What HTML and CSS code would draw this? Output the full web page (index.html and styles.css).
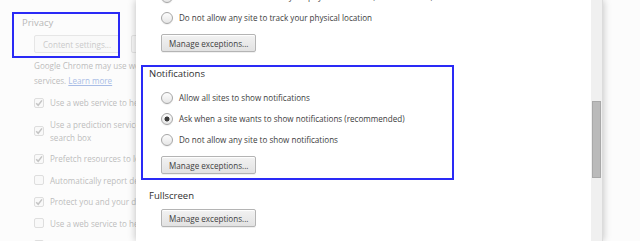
FILE: index.html
```html
<!DOCTYPE html>
<html lang="en">
<head>
    <meta charset="UTF-8">
    <title>Content settings</title>
    <link rel="stylesheet" href="styles.css">
</head>
<body>
    <!-- settings page behind the overlay -->
    <div class="settings">
        <h3 class="s-title">Privacy</h3>
        <div class="s-body">
            <div class="s-buttons">
                <button class="s-btn">Content settings...</button>
                <button class="s-btn">Clear browsing data...</button>
            </div>
            <p class="s-text">Google Chrome may use web services to improve your browsing experience. You may optionally disable these<br>services. <a href="#">Learn more</a></p>
            <ul class="s-list">
                <li><span class="cb on"></span><span>Use a web service to help resolve navigation errors</span></li>
                <li><span class="cb on"></span><span>Use a prediction service to help complete searches and URLs typed in the address bar or the app launcher<br>search box</span></li>
                <li><span class="cb on"></span><span>Prefetch resources to load pages more quickly</span></li>
                <li><span class="cb"></span><span>Automatically report details of possible security incidents to Google</span></li>
                <li><span class="cb on"></span><span>Protect you and your device from dangerous sites</span></li>
                <li><span class="cb"></span><span>Use a web service to help resolve spelling errors</span></li>
                <li><span class="cb"></span><span>Automatically send usage statistics and crash reports to Google</span></li>
            </ul>
        </div>
    </div>

    <div class="overlay">
        <div class="dialog">
            <div class="viewport">
                <div class="scroller">
                    <div class="section">
                        <h3>Location</h3>
                        <div class="rows">
                            <label class="row"><span class="radio"></span>Allow all sites to track your physical location</label>
                            <label class="row"><span class="radio checked"></span>Ask when a site tries to track your physical location (recommended)</label>
                            <label class="row"><span class="radio"></span>Do not allow any site to track your physical location</label>
                        </div>
                        <button class="btn">Manage exceptions...</button>
                    </div>
                    <div class="section marked">
                        <h3>Notifications</h3>
                        <div class="rows">
                            <label class="row"><span class="radio"></span>Allow all sites to show notifications</label>
                            <label class="row"><span class="radio checked"></span>Ask when a site wants to show notifications (recommended)</label>
                            <label class="row"><span class="radio"></span>Do not allow any site to show notifications</label>
                        </div>
                        <button class="btn">Manage exceptions...</button>
                    </div>
                    <div class="section">
                        <h3>Fullscreen</h3>
                        <button class="btn">Manage exceptions...</button>
                    </div>
                </div>
            </div>
            <div class="scrollbar"><div class="thumb"></div></div>
        </div>
        <div class="right-shade"></div>
    </div>

    <div class="mark-privacy"></div>
</body>
</html>
```
FILE: styles.css
```css
body {
    margin: 0;
    width: 640px;
    height: 241px;
    overflow: hidden;
    position: relative;
    background: #fcfcfc;
    font-family: "Open Sans", sans-serif;
    font-size: 8.1px;
}

/* page behind, already faded; the dialog hides everything right of 136px */
.settings {
    width: 136px;
    height: 241px;
    overflow: hidden;
    padding: 16px 0 0 22px;
    box-sizing: border-box;
    color: #bdbdbd;
}

.s-title {
    margin: 0;
    font-size: 9.5px;
    font-weight: normal;
    line-height: 14px;
    color: #b8b8b8;
}

.s-body {
    padding-left: 12px;
}

.s-buttons {
    display: flex;
    gap: 11px;
    margin-top: 5px;
}

.s-btn {
    flex: none;
    height: 18px;
    padding: 0 8px;
    font: inherit;
    color: #cacaca;
    background: #f9f9f9;
    border: 1px solid #e6e6e6;
    border-radius: 2px;
    white-space: nowrap;
}

.s-text {
    margin: 5px 0 0;
    line-height: 15px;
    white-space: nowrap;
}

.s-text a {
    color: #a9bde6;
}

.s-list {
    list-style: none;
    margin: 8px 0 0;
    padding: 0;
}

.s-list li {
    display: flex;
    align-items: center;
    gap: 6px;
    line-height: 13px;
    margin-bottom: 8.5px;
    white-space: nowrap;
}

.cb {
    width: 10px;
    height: 10px;
    flex: none;
    box-sizing: border-box;
    border: 1px solid #dedede;
    border-radius: 2px;
    background: #f9f9f9;
}

.cb.on {
    background: #f9f9f9 url("data:image/svg+xml;utf8,<svg xmlns='http://www.w3.org/2000/svg' width='8' height='8'><path d='M1.2 4.2 L3.2 6.3 L7 1.4' fill='none' stroke='%23c4c4c4' stroke-width='1.5'/></svg>") center no-repeat;
}

/* overlay with the dialog */
.overlay {
    position: absolute;
    inset: 0;
    display: flex;
}

.dialog {
    margin-left: 136px;
    width: 467px;
    height: 241px;
    display: flex;
    background: #fff;
    box-shadow: -2px 0 7px rgba(0, 0, 0, 0.13), 2px 0 7px rgba(0, 0, 0, 0.13);
    color: #3c3c3c;
}

.viewport {
    flex: 1;
    overflow: hidden;
}

.scroller {
    margin-top: -57px;
    padding-left: 5px;
}

.section {
    width: 313px;
    box-sizing: border-box;
    border: 2px solid transparent;
    padding: 0 0 4px 6px;
    margin-bottom: 7px;
}

.section.marked {
    border-color: #2a2af6;
}

.section h3 {
    margin: 0 0 6px;
    font-size: 9.5px;
    font-weight: normal;
    line-height: 14px;
    color: #303030;
}

.rows {
    margin: 0 0 6px 12px;
}

.row {
    display: flex;
    align-items: center;
    gap: 6px;
    height: 21px;
    white-space: nowrap;
}

.radio {
    width: 12px;
    height: 12px;
    flex: none;
    box-sizing: border-box;
    border: 1px solid #a6a6a6;
    border-radius: 50%;
    background: linear-gradient(#fdfdfd, #e6e6e6);
    box-shadow: 0 1px 1px rgba(0, 0, 0, 0.06);
}

.radio.checked {
    background: radial-gradient(circle, #3c3c3c 0 2.2px, transparent 2.8px), linear-gradient(#fdfdfd, #e6e6e6);
}

.btn {
    display: block;
    margin-left: 12px;
    height: 18px;
    padding: 0 7px;
    font: inherit;
    color: #404040;
    background: linear-gradient(#f2f2f2, #e2e2e2);
    border: 1px solid #b4b4b4;
    border-radius: 2px;
    box-shadow: 0 1px 0 rgba(0, 0, 0, 0.06), inset 0 1px 1px #fff;
    white-space: nowrap;
}

.scrollbar {
    width: 12px;
    background: #f0f0f0;
    border-right: 1px solid #dcdcdc;
    box-sizing: border-box;
    padding-top: 101px;
}

.thumb {
    margin-left: 1px;
    width: 9px;
    height: 77px;
    box-sizing: border-box;
    background: #bababa;
    border: 1px solid #a8a8a8;
}

.right-shade {
    flex: 1;
}

.mark-privacy {
    position: absolute;
    left: 12px;
    top: 12px;
    width: 108px;
    height: 46px;
    box-sizing: border-box;
    border: 2px solid #2a2af6;
}
```
